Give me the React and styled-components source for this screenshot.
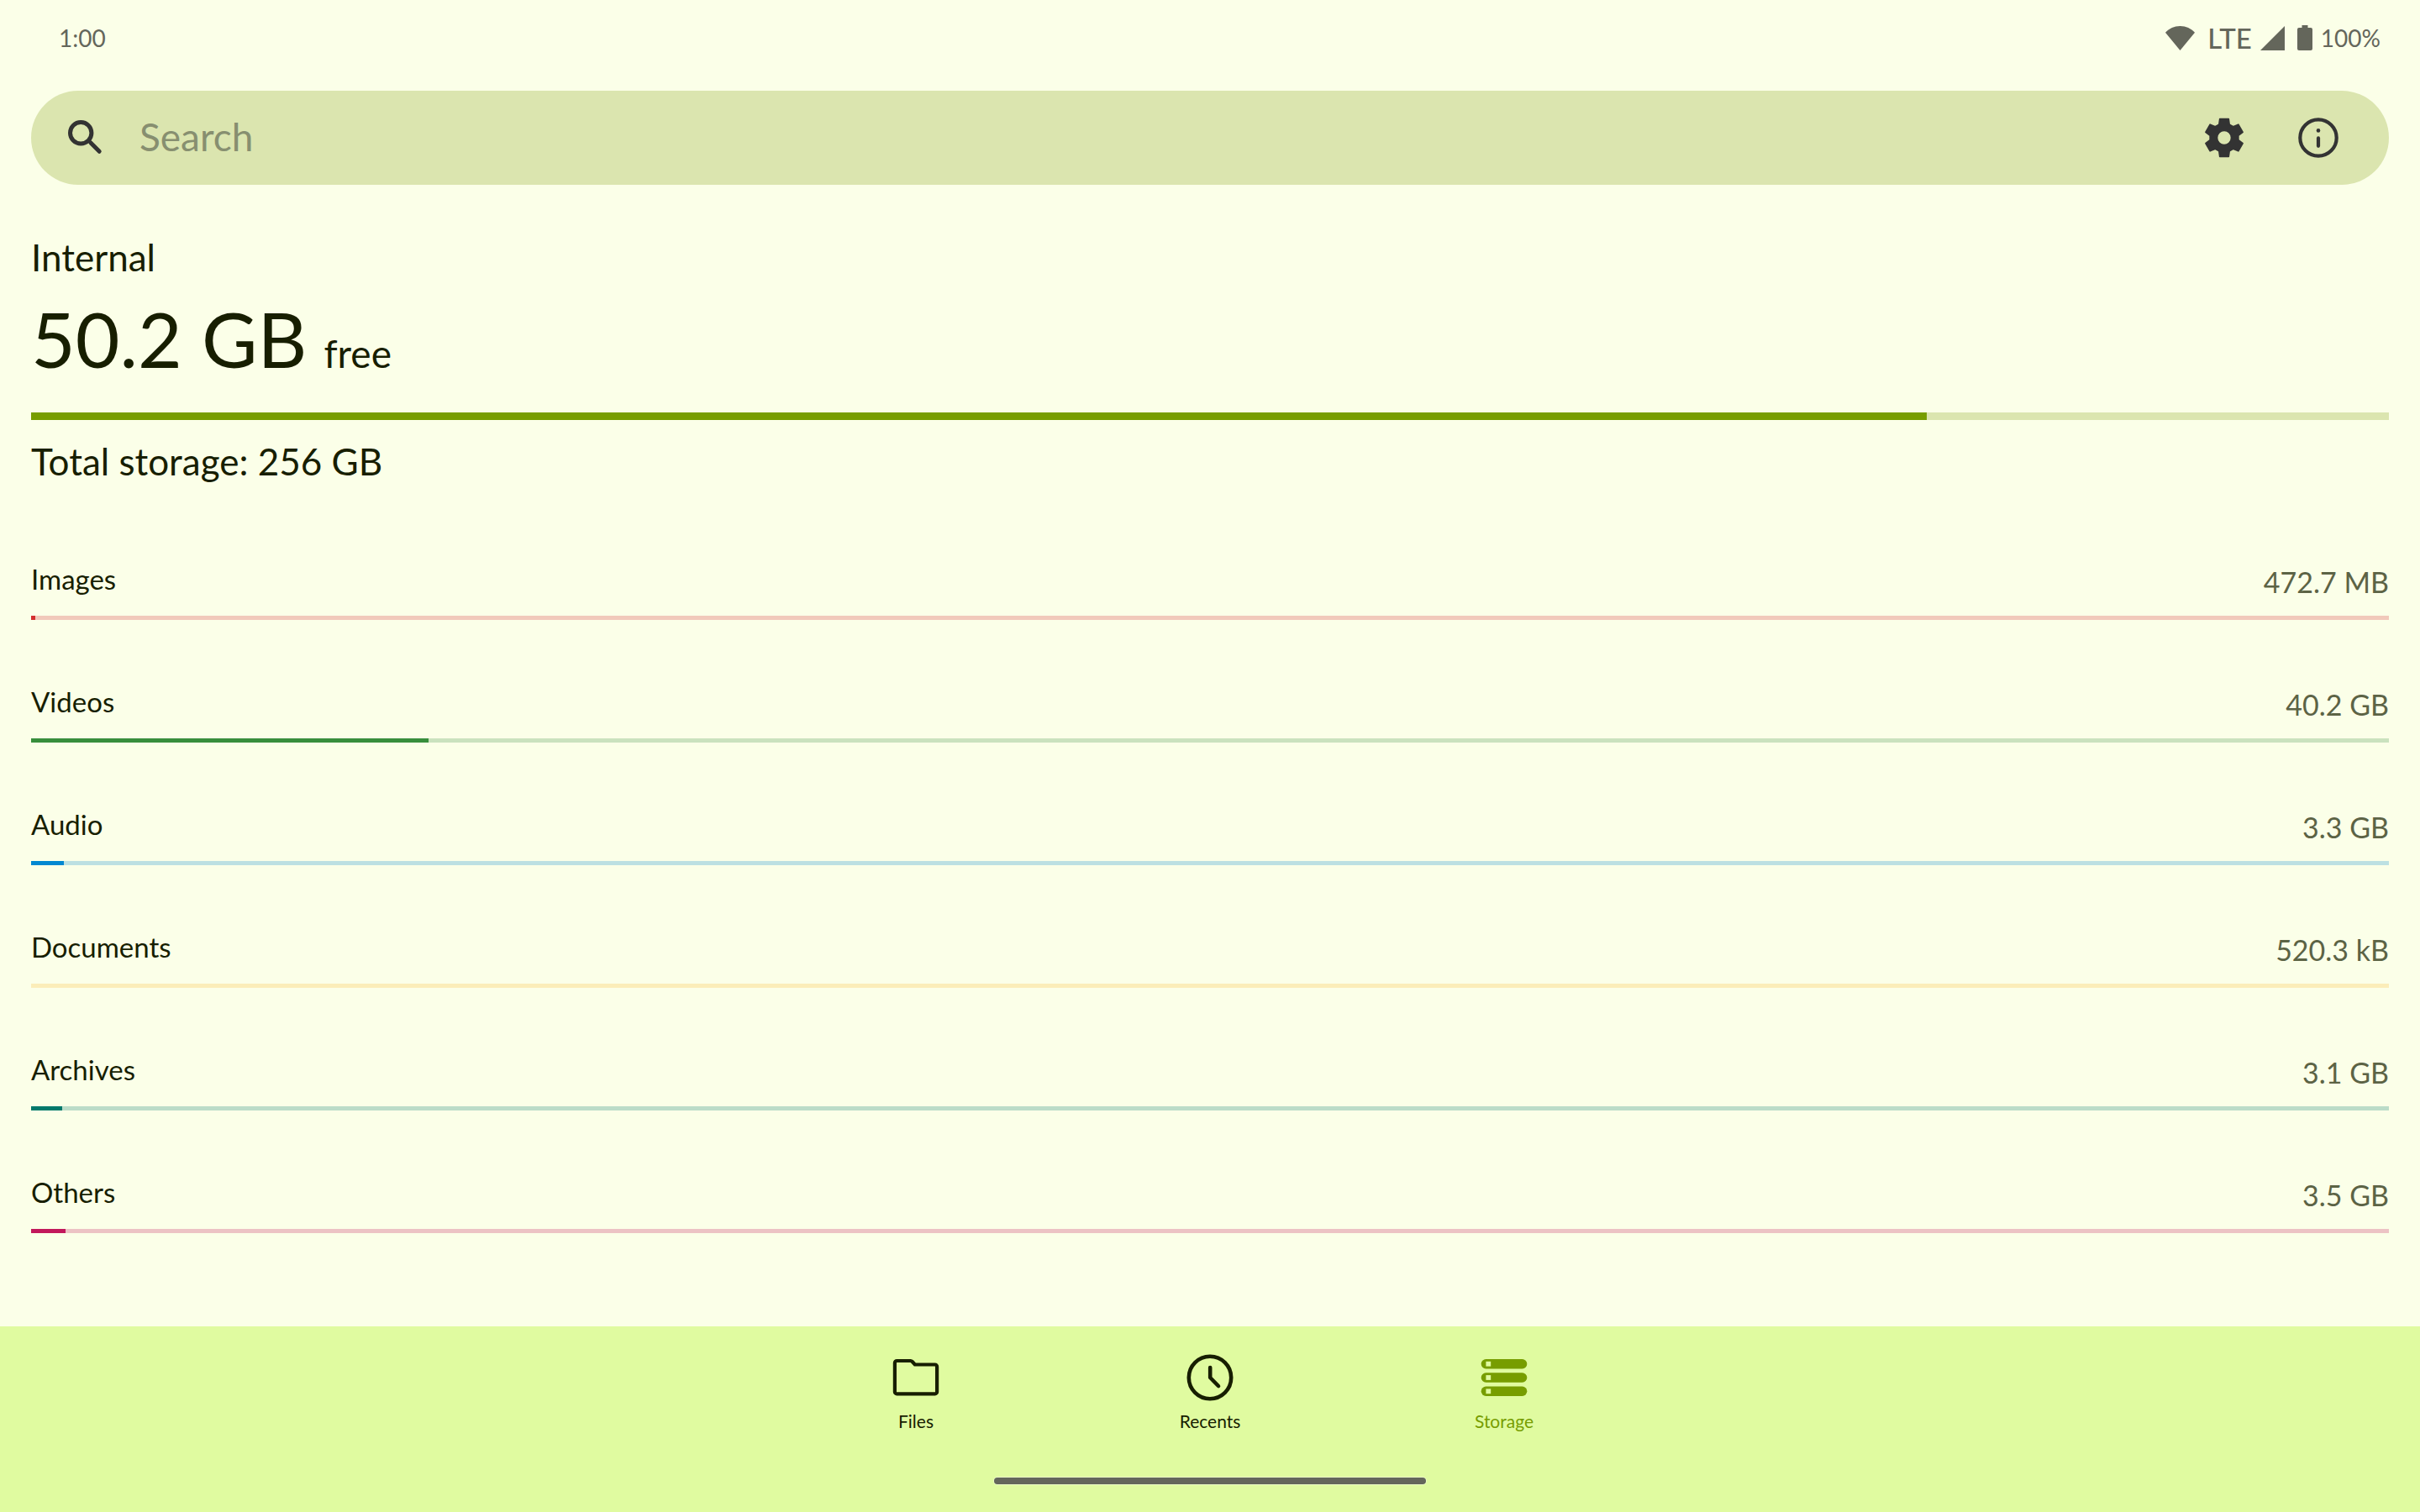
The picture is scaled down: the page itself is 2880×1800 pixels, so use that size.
import React, { useState } from 'react';
import styled, { createGlobalStyle } from 'styled-components';

const color = {
  page: '#fbffe8',
  text: '#171e00',
  muted: '#5c6345',
  status: '#64665b',
  field: '#dbe5af',
  placeholder: '#878f70',
  icon: '#333333',
  accent: '#779d00',
  nav: '#e0fba0',
};

const GlobalStyle = createGlobalStyle`
  *, *::before, *::after { box-sizing: border-box; }
  body {
    margin: 0;
    background: ${color.page};
    color: ${color.text};
    font-family: Lato, Roboto, "Liberation Sans", sans-serif;
  }
  button, input { font: inherit; color: inherit; }
`;

const Screen = styled.div`
  display: flex;
  flex-direction: column;
  min-height: 100vh;
`;

/* Status bar */

const StatusBar = styled.header`
  display: flex;
  align-items: center;
  justify-content: space-between;
  height: 90px;
  padding: 0 47px 0 70px;
  color: ${color.status};
  font-size: 28px;
`;

const StatusIcons = styled.div`
  display: flex;
  align-items: center;
  gap: 15px;
`;

const StatusGroup = styled.span`
  display: flex;
  align-items: center;
  gap: 10px;
`;

const NetworkType = styled.span`
  font-size: 33px;
  font-weight: 500;
`;

/* Search */

const Content = styled.main`
  flex: 1;
  padding: 18px 37px 64px;
`;

const SearchBar = styled.form`
  display: flex;
  align-items: center;
  height: 112px;
  padding: 0 28px 0 38px;
  border-radius: 56px;
  background: ${color.field};
  color: ${color.icon};
`;

const SearchLabel = styled.label`
  display: flex;
`;

const SearchInput = styled.input`
  flex: 1;
  min-width: 0;
  height: 100%;
  padding: 0 37px 4px;
  border: 0;
  outline: 0;
  background: transparent;
  font-size: 46px;

  &::placeholder {
    color: ${color.placeholder};
    opacity: 1;
  }
`;

const IconButton = styled.button`
  display: grid;
  place-items: center;
  width: 112px;
  height: 112px;
  padding: 0;
  border: 0;
  background: transparent;
  cursor: pointer;
`;

/* Storage overview */

const Overview = styled.section`
  margin-top: 56px;
`;

const VolumeName = styled.h1`
  margin: 0 0 12px;
  font-size: 44px;
  font-weight: 400;
  line-height: 60px;
`;

const FreeSpace = styled.p`
  display: flex;
  align-items: baseline;
  gap: 20px;
  margin: 0 0 15px;
  font-size: 46px;
  line-height: 110px;
`;

const FreeAmount = styled.span`
  font-size: 91px;
`;

const TotalSpace = styled.p`
  margin: 19px 0 0;
  font-size: 44px;
  line-height: 60px;
`;

const Track = styled.div`
  height: ${(p) => p.$height}px;
  background: ${(p) => p.$track};
`;

const Fill = styled.div`
  height: 100%;
  background: ${(p) => p.$color};
`;

/* Categories */

const CategoryList = styled.ul`
  display: flex;
  flex-direction: column;
  gap: 76px;
  margin: 89px 0 0;
  padding: 0;
  list-style: none;
`;

const CategoryHead = styled.div`
  display: flex;
  align-items: flex-start;
  justify-content: space-between;
  margin-bottom: 15px;
`;

const CategoryName = styled.span`
  font-size: 33px;
  line-height: 42px;
`;

const CategorySize = styled.span`
  color: ${color.muted};
  font-size: 34px;
  line-height: 50px;
`;

/* Bottom navigation */

const BottomBar = styled.footer`
  padding: 28px 0 33px;
  background: ${color.nav};
`;

const Tabs = styled.nav`
  display: flex;
  justify-content: center;
`;

const Tab = styled.button`
  display: flex;
  flex-direction: column;
  align-items: center;
  gap: 5px;
  width: 350px;
  padding: 0;
  border: 0;
  background: transparent;
  color: ${(p) => (p.$active ? color.accent : color.text)};
  font-size: 21px;
  line-height: 28px;
  cursor: pointer;
`;

const HomeHandle = styled.div`
  width: 514px;
  height: 8px;
  margin: 53px auto 0;
  border-radius: 4px;
  background: ${color.status};
  box-shadow: 0 0 0 1px rgba(255, 255, 255, 0.4);
`;

/* Icons */

const WifiIcon = () => (
  <svg width="35" height="29" viewBox="0 0 35 29" fill="currentColor" aria-hidden="true">
    <path d="M17.5 29 0 7.8C4.5 2.8 10.5 0 17.5 0S30.5 2.8 35 7.8Z" />
  </svg>
);

const SignalIcon = () => (
  <svg width="29" height="29" viewBox="0 0 29 29" fill="currentColor" aria-hidden="true">
    <path d="M29 0v29H0Z" />
  </svg>
);

const BatteryIcon = () => (
  <svg width="18" height="30" viewBox="0 0 18 30" fill="currentColor" aria-hidden="true">
    <path d="M5.5 0h7v3H16a2 2 0 0 1 2 2v23a2 2 0 0 1-2 2H2a2 2 0 0 1-2-2V5a2 2 0 0 1 2-2h3.5Z" />
  </svg>
);

const SearchIcon = () => (
  <svg width="54" height="54" viewBox="0 0 54 54" fill="none" stroke="currentColor" strokeWidth="5" aria-hidden="true">
    <circle cx="21.2" cy="21.2" r="12.7" />
    <path d="m30.5 30.5 3 3" strokeWidth="4" />
    <path d="M33.2 33.2 43.2 43.3" strokeLinecap="round" />
  </svg>
);

// Outline of one gear tooth, repeated every 60 degrees around the hub.
const tooth = [[-6.2, -15.9], [-5.3, -22.5], [5.3, -22.5], [6.2, -15.9]];
const gearOutline = [0, 1, 2, 3, 4, 5]
  .flatMap((n) => {
    const a = (n * Math.PI) / 3;
    return tooth.map(([x, y]) => [
      (x * Math.cos(a) - y * Math.sin(a)).toFixed(2),
      (x * Math.sin(a) + y * Math.cos(a)).toFixed(2),
    ]);
  })
  .map((p) => p.join(' '))
  .join('L');
const gearPath = `M${gearOutline}ZM8.5 0A8.5 8.5 0 1 0-8.5 0A8.5 8.5 0 1 0 8.5 0Z`;

const SettingsIcon = () => (
  <svg width="54" height="54" viewBox="-27 -27 54 54" aria-hidden="true">
    <path
      d={gearPath}
      fill="currentColor"
      fillRule="evenodd"
      stroke="currentColor"
      strokeWidth="1.6"
      strokeLinejoin="round"
    />
  </svg>
);

const InfoIcon = () => (
  <svg width="54" height="54" viewBox="-27 -27 54 54" fill="none" stroke="currentColor" strokeWidth="4.2" aria-hidden="true">
    <circle r="21.7" />
    <path d="M0 .4v9.4" strokeLinecap="round" />
    <circle cy="-8.6" r="2.3" fill="currentColor" stroke="none" />
  </svg>
);

const FolderIcon = () => (
  <svg width="66" height="66" viewBox="0 0 66 66" fill="none" stroke="currentColor" strokeWidth="4.2" aria-hidden="true">
    <path d="M10.3 13H26.5a3 3 0 0 1 2.2 1L31.8 17.5H55.7a2.4 2.4 0 0 1 2.4 2.4V49.9a2.4 2.4 0 0 1-2.4 2.4H10.3a2.4 2.4 0 0 1-2.4-2.4V15.4A2.4 2.4 0 0 1 10.3 13Z" />
  </svg>
);

const ClockIcon = () => (
  <svg width="66" height="66" viewBox="0 0 66 66" fill="none" stroke="currentColor" strokeWidth="4.6" aria-hidden="true">
    <circle cx="33" cy="33" r="25.2" />
    <path d="M33.2 21V33L43 43" strokeLinecap="round" strokeLinejoin="round" />
  </svg>
);

const StorageIcon = () => (
  <svg width="66" height="66" viewBox="0 0 66 66" fill="currentColor" aria-hidden="true">
    {[11, 27.3, 43.6].map((y) => (
      <g key={y}>
        <rect x="5.7" y={y} width="54.6" height="11.4" rx="5.7" />
        <rect x="11.4" y={y + 2.8} width="5.8" height="5.8" fill={color.nav} />
      </g>
    ))}
  </svg>
);

/* Data */

const categories = [
  { name: 'Images', size: '472.7 MB', percent: 0.18, color: '#d32f2f', track: '#f1c9ba' },
  { name: 'Videos', size: '40.2 GB', percent: 16.87, color: '#388e3c', track: '#cae2be' },
  { name: 'Audio', size: '3.3 GB', percent: 1.39, color: '#0288d1', track: '#bce0e2' },
  { name: 'Documents', size: '520.3 kB', percent: 0, color: '#fbc02d', track: '#fbedb9' },
  { name: 'Archives', size: '3.1 GB', percent: 1.31, color: '#00796b', track: '#bbdcc8' },
  { name: 'Others', size: '3.5 GB', percent: 1.46, color: '#c2185b', track: '#ecc3c4' },
];

const tabs = [
  { id: 'files', label: 'Files', Icon: FolderIcon },
  { id: 'recents', label: 'Recents', Icon: ClockIcon },
  { id: 'storage', label: 'Storage', Icon: StorageIcon },
];

function UsageBar({ label, percent, height, fill, track }) {
  return (
    <Track
      role="meter"
      aria-label={label}
      aria-valuemin={0}
      aria-valuemax={100}
      aria-valuenow={percent}
      $height={height}
      $track={track}
    >
      <Fill $color={fill} style={{ width: `${percent}%` }} />
    </Track>
  );
}

function Category({ item }) {
  return (
    <li>
      <CategoryHead>
        <CategoryName>{item.name}</CategoryName>
        <CategorySize>{item.size}</CategorySize>
      </CategoryHead>
      <UsageBar label={item.name} percent={item.percent} height={5} fill={item.color} track={item.track} />
    </li>
  );
}

export default function App() {
  const [activeTab, setActiveTab] = useState('storage');

  return (
    <Screen>
      <GlobalStyle />
      <StatusBar>
        <span>1:00</span>
        <StatusIcons>
          <WifiIcon />
          <StatusGroup>
            <NetworkType>LTE</NetworkType>
            <SignalIcon />
          </StatusGroup>
          <StatusGroup>
            <BatteryIcon />
            <span>100%</span>
          </StatusGroup>
        </StatusIcons>
      </StatusBar>

      <Content>
        <SearchBar role="search" onSubmit={(e) => e.preventDefault()}>
          <SearchLabel htmlFor="search" aria-label="Search">
            <SearchIcon />
          </SearchLabel>
          <SearchInput id="search" type="text" placeholder="Search" />
          <IconButton type="button" aria-label="Settings">
            <SettingsIcon />
          </IconButton>
          <IconButton type="button" aria-label="About">
            <InfoIcon />
          </IconButton>
        </SearchBar>

        <Overview>
          <VolumeName>Internal</VolumeName>
          <FreeSpace>
            <FreeAmount>50.2 GB</FreeAmount>
            <span>free</span>
          </FreeSpace>
          <UsageBar label="Used space" percent={80.4} height={9} fill={color.accent} track={color.field} />
          <TotalSpace>Total storage: 256 GB</TotalSpace>
        </Overview>

        <CategoryList>
          {categories.map((item) => (
            <Category key={item.name} item={item} />
          ))}
        </CategoryList>
      </Content>

      <BottomBar>
        <Tabs>
          {tabs.map(({ id, label, Icon }) => (
            <Tab
              key={id}
              type="button"
              $active={id === activeTab}
              aria-current={id === activeTab ? 'page' : undefined}
              onClick={() => setActiveTab(id)}
            >
              <Icon />
              <span>{label}</span>
            </Tab>
          ))}
        </Tabs>
        <HomeHandle />
      </BottomBar>
    </Screen>
  );
}
